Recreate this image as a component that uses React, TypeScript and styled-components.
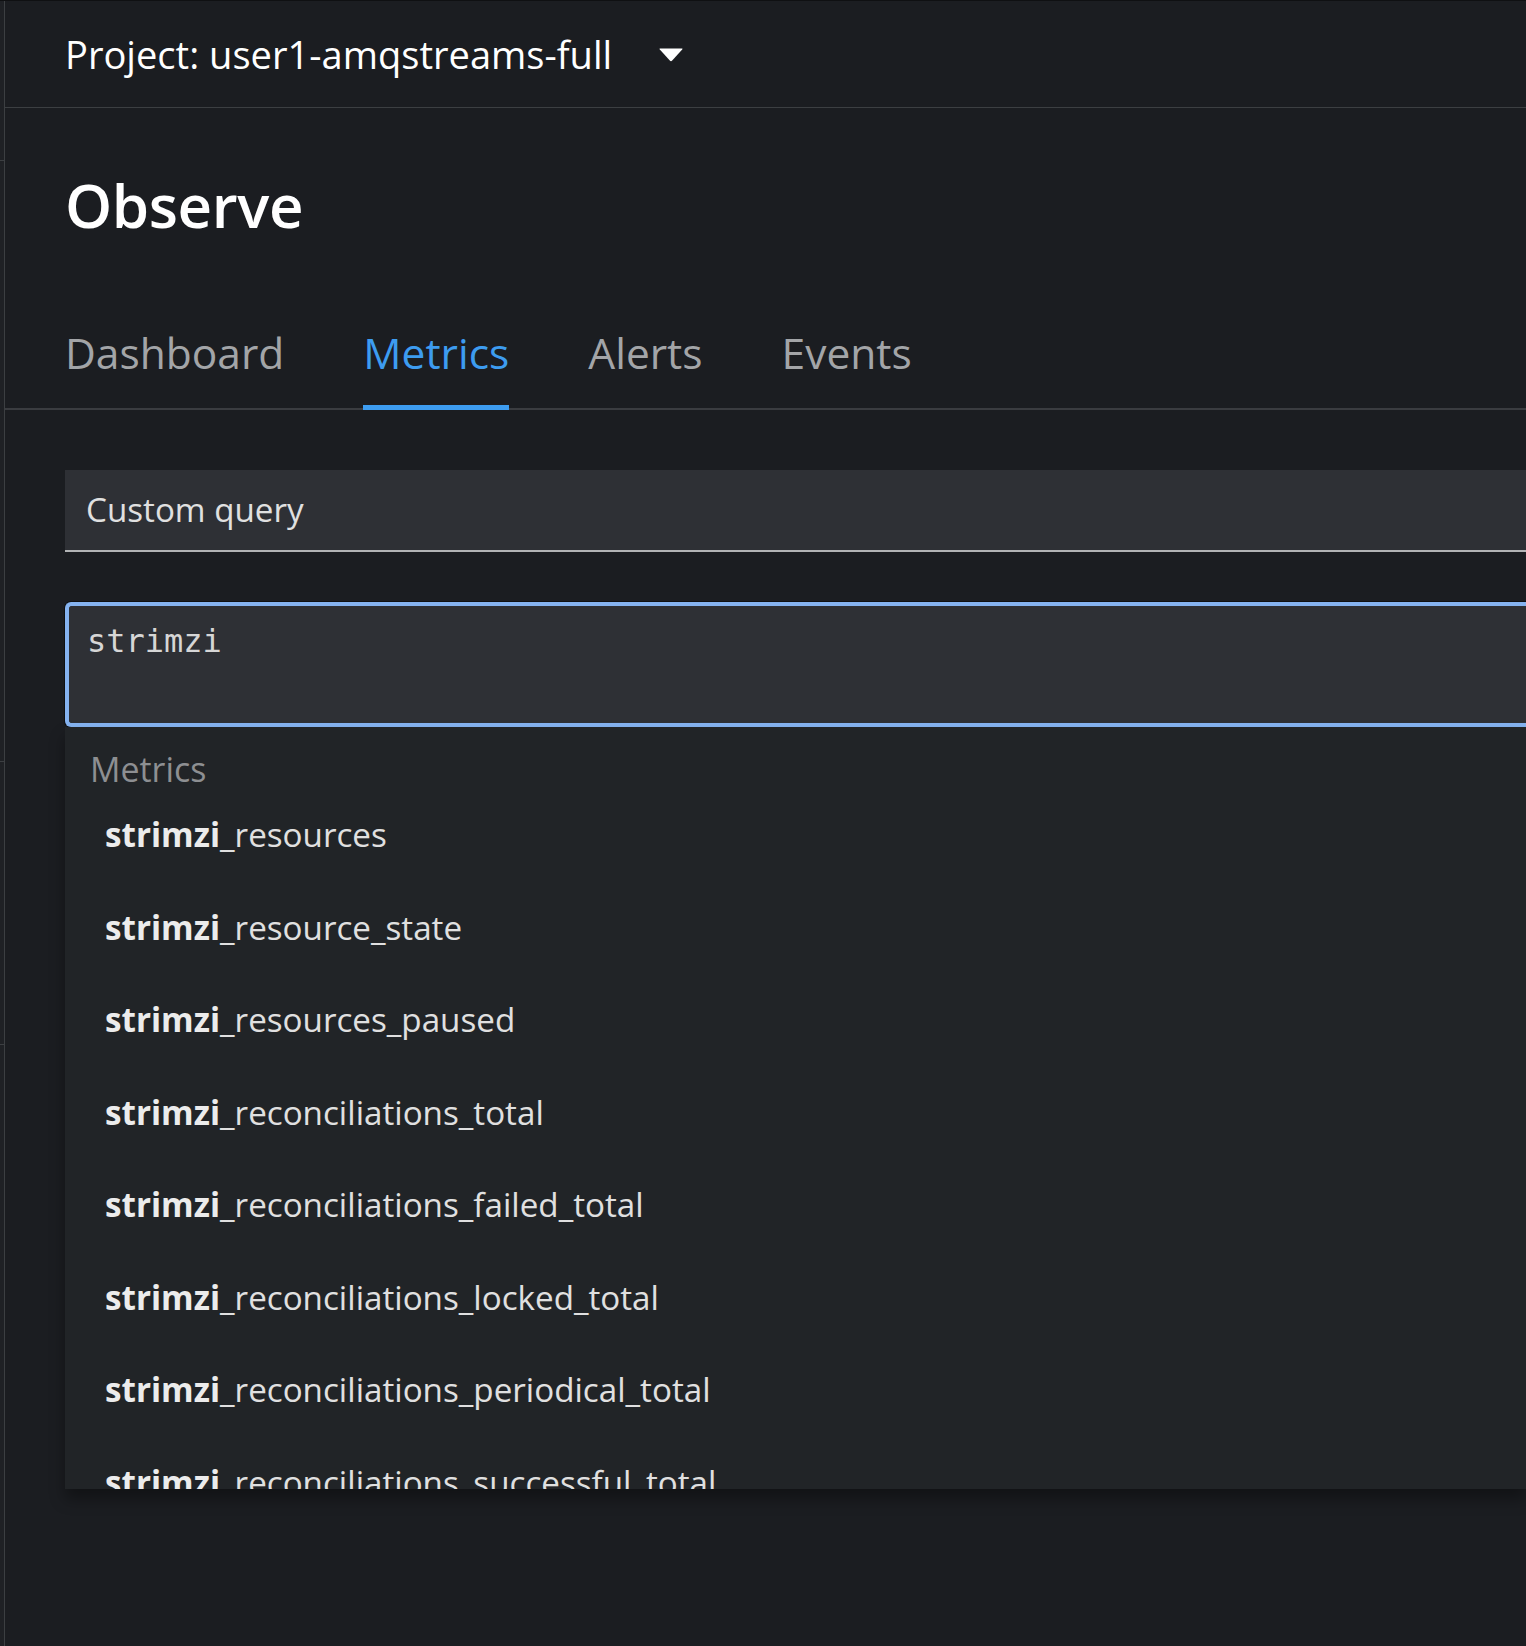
import React from "react";
import styled, { createGlobalStyle } from "styled-components";

const GlobalStyle = createGlobalStyle`
  html, body {
    margin: 0;
    padding: 0;
    background: #1b1d21;
    overflow: hidden;
  }
  body {
    font-family: "Open Sans", "Noto Sans", sans-serif;
    color: #e0e0e0;
  }
  * { box-sizing: border-box; }
`;

const Shell = styled.div`
  display: flex;
  min-height: 1646px;
  border-top: 1px solid #0f1012;
`;

const LeftRail = styled.div`
  width: 5px;
  flex: none;
  background: #1f2125;
  border-right: 1px solid #3c3f42;
  display: flex;
  flex-direction: column;
`;

const RailTick = styled.div<{ $top: number }>`
  margin-top: ${(p) => p.$top}px;
  height: 1px;
  background: #3c3f42;
`;

const Main = styled.div`
  flex: 1;
  min-width: 0;
  display: flex;
  flex-direction: column;
`;

const Header = styled.header`
  height: 107px;
  border-bottom: 1px solid #3c3f42;
  padding-left: 60px;
  display: flex;
  align-items: center;
  gap: 47px;
`;

const ProjectLabel = styled.span`
  font-size: 38.1px;
  color: #ffffff;
  white-space: nowrap;
`;

const Caret = styled.svg`
  width: 24px;
  height: 14px;
  margin-top: 2px;
  display: block;
`;

const TitleBlock = styled.div`
  padding: 68px 0 0 60px;
`;

const PageTitle = styled.h1`
  margin: 0;
  font-size: 60px;
  line-height: 58px;
  font-weight: 600;
  color: #ffffff;
  letter-spacing: -0.4px;
`;

const TabBar = styled.nav`
  margin-top: 98px;
  padding-left: 60px;
  display: flex;
  gap: 79px;
  border-bottom: 2px solid #3a3c40;
`;

const Tab = styled.div<{ $active?: boolean }>`
  font-size: 42.5px;
  line-height: 42px;
  padding-bottom: 31px;
  color: ${(p) => (p.$active ? "#3d9cf0" : "#a3a5a8")};
  border-bottom: 5px solid ${(p) => (p.$active ? "#3d9cf0" : "transparent")};
  margin-bottom: -2px;
  white-space: nowrap;
`;

const Content = styled.div`
  padding: 60px 0 0 60px;
  display: flex;
  flex-direction: column;
`;

const QueryBar = styled.div`
  height: 82px;
  background: #2e3035;
  border-bottom: 2px solid #b2b3b5;
  padding-left: 21px;
  display: flex;
  align-items: center;
  font-size: 33.2px;
  line-height: 80px;
  color: #e0e0e0;
`;

const QueryInput = styled.div`
  margin-top: 50px;
  height: 125px;
  background: #2e3035;
  border: 4px solid #85b3f0;
  border-radius: 6px 0 0 6px;
  border-right: none;
  box-shadow: 0 0 0 1px #0f1012;
  padding: 15px 0 0 18px;
  font-family: "DejaVu Sans Mono", "Liberation Mono", monospace;
  font-size: 32px;
  line-height: 40px;
  color: #d6d6d6;
`;

const Menu = styled.div`
  height: 762px;
  background: #212427;
  overflow: hidden;
  box-shadow: 0 10px 14px rgba(0, 0, 0, 0.35);
  padding-top: 22px;
`;

const GroupLabel = styled.div`
  padding-left: 25px;
  font-size: 33.9px;
  line-height: 40px;
  color: #8d8f92;
`;

const MenuItem = styled.div`
  padding-left: 40px;
  height: 92.5px;
  font-size: 33.2px;
  line-height: 92.5px;
  color: #e0e0e0;
  white-space: nowrap;
`;

const Match = styled.strong`
  font-weight: 700;
  color: #ececec;
`;

const metrics = [
  "resources",
  "resource_state",
  "resources_paused",
  "reconciliations_total",
  "reconciliations_failed_total",
  "reconciliations_locked_total",
  "reconciliations_periodical_total",
  "reconciliations_successful_total",
  "reconciliations_already_enqueued_total",
];

export default function App() {
  return (
    <>
      <GlobalStyle />
      <Shell>
        <LeftRail>
          <RailTick $top={159} />
          <RailTick $top={600} />
          <RailTick $top={282} />
        </LeftRail>
        <Main>
          <Header>
            <ProjectLabel>Project: user1-amqstreams-full</ProjectLabel>
            <Caret viewBox="0 0 24 14" aria-hidden>
              <path d="M1 0.5 H23 Q24 0.5 23.2 1.4 L13.2 12.6 Q12 13.8 10.8 12.6 L0.8 1.4 Q0 0.5 1 0.5 Z" fill="#ffffff" />
            </Caret>
          </Header>
          <TitleBlock>
            <PageTitle>Observe</PageTitle>
          </TitleBlock>
          <TabBar>
            <Tab>Dashboard</Tab>
            <Tab $active>Metrics</Tab>
            <Tab>Alerts</Tab>
            <Tab>Events</Tab>
          </TabBar>
          <Content>
            <QueryBar>Custom query</QueryBar>
            <QueryInput>strimzi</QueryInput>
            <Menu>
              <GroupLabel>Metrics</GroupLabel>
              {metrics.map((m) => (
                <MenuItem key={m}>
                  <Match>strimzi</Match>_{m}
                </MenuItem>
              ))}
            </Menu>
          </Content>
        </Main>
      </Shell>
    </>
  );
}
